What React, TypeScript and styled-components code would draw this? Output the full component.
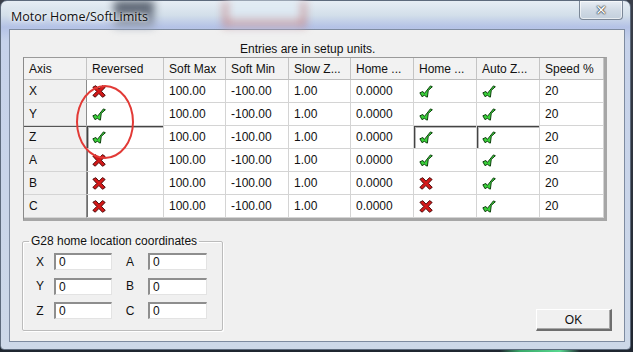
import React from "react";
import styled, { createGlobalStyle, css } from "styled-components";

const GlobalStyle = createGlobalStyle`
  html, body { margin: 0; padding: 0; }
  body {
    width: 633px;
    height: 352px;
    overflow: hidden;
    background: #2b3442;
    font-family: "Liberation Sans", Arial, sans-serif;
  }
`;

type Row = {
  axis: string;
  reversed: boolean;
  softMax: string;
  softMin: string;
  slowZone: string;
  homeOffset: string;
  homeReversed: boolean;
  autoZero: boolean;
  speed: string;
};

const rows: Row[] = [
  { axis: "X", reversed: false, softMax: "100.00", softMin: "-100.00", slowZone: "1.00", homeOffset: "0.0000", homeReversed: true, autoZero: true, speed: "20" },
  { axis: "Y", reversed: true, softMax: "100.00", softMin: "-100.00", slowZone: "1.00", homeOffset: "0.0000", homeReversed: true, autoZero: true, speed: "20" },
  { axis: "Z", reversed: true, softMax: "100.00", softMin: "-100.00", slowZone: "1.00", homeOffset: "0.0000", homeReversed: true, autoZero: true, speed: "20" },
  { axis: "A", reversed: false, softMax: "100.00", softMin: "-100.00", slowZone: "1.00", homeOffset: "0.0000", homeReversed: true, autoZero: true, speed: "20" },
  { axis: "B", reversed: false, softMax: "100.00", softMin: "-100.00", slowZone: "1.00", homeOffset: "0.0000", homeReversed: false, autoZero: true, speed: "20" },
  { axis: "C", reversed: false, softMax: "100.00", softMin: "-100.00", slowZone: "1.00", homeOffset: "0.0000", homeReversed: false, autoZero: true, speed: "20" },
];

const headers = ["Axis", "Reversed", "Soft Max", "Soft Min", "Slow Z...", "Home ...", "Home ...", "Auto Z...", "Speed %"];

const g28 = [
  ["X", "0", "A", "0"],
  ["Y", "0", "B", "0"],
  ["Z", "0", "C", "0"],
];

const CheckIcon = () => (
  <svg width="14" height="13" viewBox="0 0 13 12">
    <path
      d="M0.8 7.2 L3.6 6 L5 7.8 L10.6 0.8 L12.4 1.6 L8.6 5 L7.8 11.2 L6.2 10.6 L5.2 9.4 L2.8 10.8 Z"
      fill="#3ad13a"
      stroke="#0b3d0b"
      strokeWidth="0.9"
      strokeLinejoin="round"
    />
  </svg>
);

const CrossIcon = () => (
  <svg width="14" height="13" viewBox="0 0 13 12">
    <path
      d="M0.8 2 L3.5 0.6 L6.5 3.8 L9.8 0.5 L12.2 2.2 L8.7 5.8 L12.3 9.6 L9.8 11.4 L6.4 7.9 L3 11.3 L0.8 9.6 L4.4 6 Z"
      fill="#d41818"
      stroke="#4a0808"
      strokeWidth="0.9"
      strokeLinejoin="round"
    />
  </svg>
);

export default function App() {
  return (
    <>
      <GlobalStyle />
      <Desktop>
        <Window>
          <TitleBar>
            <Title>Motor Home/SoftLimits</Title>
            <GlassBlob $left={105} $width={40} $tone="dark" />
            <GlassBlob $left={215} $width={75} $tone="red" />
            <CloseButton>
              <CloseGlyph>✕</CloseGlyph>
            </CloseButton>
          </TitleBar>
          <Client>
            <Caption>Entries are in setup units.</Caption>
            <Grid>
              {headers.map((h, i) => (
                <HeaderCell key={i}>{h}</HeaderCell>
              ))}
              {rows.map((r) => {
                const focus = r.axis === "Z";
                const darkLeft = ["Z", "A", "B", "C"].includes(r.axis);
                return (
                  <React.Fragment key={r.axis}>
                    <AxisCell $focus={focus}>{r.axis}</AxisCell>
                    <Cell $sunken={focus} $darkLeft={darkLeft}>
                      {r.reversed ? <CheckIcon /> : <CrossIcon />}
                    </Cell>
                    <Cell>{r.softMax}</Cell>
                    <Cell>{r.softMin}</Cell>
                    <Cell>{r.slowZone}</Cell>
                    <Cell>{r.homeOffset}</Cell>
                    <Cell $sunken={focus}>{r.homeReversed ? <CheckIcon /> : <CrossIcon />}</Cell>
                    <Cell $sunken={focus}>{r.autoZero ? <CheckIcon /> : <CrossIcon />}</Cell>
                    <Cell>{r.speed}</Cell>
                  </React.Fragment>
                );
              })}
              <Annotation />
            </Grid>
            <BottomRow>
              <GroupBox>
                <Legend>G28 home location coordinates</Legend>
                <CoordGrid>
                  {g28.map((row) => (
                    <React.Fragment key={row[0]}>
                      <CoordLabel>{row[0]}</CoordLabel>
                      <CoordInput>{row[1]}</CoordInput>
                      <CoordLabel>{row[2]}</CoordLabel>
                      <CoordInput>{row[3]}</CoordInput>
                    </React.Fragment>
                  ))}
                </CoordGrid>
              </GroupBox>
              <OkButton>OK</OkButton>
            </BottomRow>
          </Client>
        </Window>
      </Desktop>
    </>
  );
}

const Desktop = styled.div`
  width: 633px;
  height: 352px;
  background:
    linear-gradient(90deg, transparent 0 500px, #3aa86a 520px, #58d890 560px, transparent 580px) 0 346px / 100% 6px no-repeat,
    linear-gradient(180deg, #3a3f4a, #1f2630);
`;

const Window = styled.div`
  width: 631px;
  height: 350px;
  box-sizing: border-box;
  padding: 0 5px 7px 8px;
  display: flex;
  flex-direction: column;
  border-radius: 7px 7px 4px 4px;
  border: 1px solid #5d6a7c;
  background: linear-gradient(180deg, #e6edf4 0%, #d3dfea 14px, #b4c2e6 26px, #c6d2ea 40px, #cdd8e8 100%);
`;

const TitleBar = styled.div`
  position: relative;
  height: 28px;
  display: flex;
  align-items: flex-start;
  padding-left: 2px;
`;

const Title = styled.div`
  position: relative;
  z-index: 1;
  margin-top: 7px;
  font-family: "Open Sans", "Liberation Sans", sans-serif;
  font-size: 12.5px;
  color: #111;
  text-shadow: 0 0 6px #fff, 0 0 3px #fff;
`;

const GlassBlob = styled.div<{ $left: number; $width: number; $tone: "dark" | "red" }>`
  position: absolute;
  top: 0;
  left: ${(p) => p.$left}px;
  width: ${(p) => p.$width}px;
  height: 26px;
  filter: blur(4px);
  ${(p) =>
    p.$tone === "dark"
      ? css`background: linear-gradient(180deg, #4b5460, #9aa4b8);`
      : css`
          background: linear-gradient(180deg, #e4eef6, #d8e4ee 70%, #c98080 85%, #b8c4e4);
          border-left: 3px solid #c07070;
          border-right: 3px solid #c07070;
        `}
`;

const CloseButton = styled.div`
  margin-left: auto;
  margin-right: 2px;
  width: 44px;
  height: 19px;
  box-sizing: border-box;
  border: 1px solid #7b8797;
  border-top: none;
  border-radius: 0 0 4px 4px;
  background: linear-gradient(180deg, #e9eef4, #cfd9e4 55%, #c3cfdc);
  box-shadow: inset 0 0 0 1px rgba(255, 255, 255, 0.6);
  display: flex;
  align-items: center;
  justify-content: center;
`;

const CloseGlyph = styled.span`
  font-family: "DejaVu Sans", sans-serif;
  font-size: 14px;
  font-weight: bold;
  color: #fff;
  text-shadow: 0 0 1px #333, 0 0 2px #333, 0 0 1px #333;
`;

const Client = styled.div`
  flex: 1;
  display: flex;
  flex-direction: column;
  padding: 0 19px 0 13px;
  background: #f0f0f0;
  border: 1px solid #7e8ba0;
`;

const Caption = styled.div`
  margin-top: 12px;
  height: 14px;
  line-height: 14px;
  padding-left: 217px;
  font-size: 12px;
  color: #111;
`;

const Grid = styled.div`
  position: relative;
  margin-top: 1px;
  display: grid;
  grid-template-columns: 63px 77px 62px 63px 62px 63px 63px 63px 64px;
  grid-template-rows: 22px repeat(6, 23px);
  width: 584px;
  box-sizing: border-box;
  border-left: 1px solid #8a8a8a;
  border-top: 1px solid #9a9a9a;
  border-right: 3px solid #a6a6a6;
  border-bottom: 3px solid #a6a6a6;
  background: #fff;
  font-size: 12px;
  color: #111;
`;

const cellBase = css`
  box-sizing: border-box;
  display: flex;
  align-items: center;
  padding-left: 5px;
  white-space: nowrap;
  overflow: hidden;
  border-right: 1px solid #d4d4d4;
  border-bottom: 1px solid #d4d4d4;
`;

const HeaderCell = styled.div`
  ${cellBase};
  background: #f2f2f2;
  border-right-color: #c4c4c4;
  border-bottom-color: #bdbdbd;
`;

const AxisCell = styled.div<{ $focus?: boolean }>`
  ${cellBase};
  background: #f0f0f0;
  border-right: 1px solid #8c8c8c;
  ${(p) => p.$focus && css`box-shadow: inset 0 1px 0 #555;`}
`;

const Cell = styled.div<{ $sunken?: boolean; $darkLeft?: boolean }>`
  ${cellBase};
  background: #fff;
  ${(p) => p.$darkLeft && css`box-shadow: inset 1px 0 0 #6d6d6d;`}
  ${(p) => p.$sunken && css`box-shadow: inset 1px 1px 0 #444, inset 2px 2px 0 #b5b5b5;`}
`;

const Annotation = styled.div`
  position: absolute;
  left: 52px;
  top: 27px;
  width: 58px;
  height: 74px;
  box-sizing: border-box;
  border: 2px solid #e23a36;
  border-radius: 50%;
  pointer-events: none;
`;

const BottomRow = styled.div`
  margin-top: 13px;
  margin-right: -7px;
  display: flex;
  align-items: flex-end;
  justify-content: space-between;
`;

const GroupBox = styled.fieldset`
  margin: 0 0 0 -1px;
  width: 201px;
  height: 97px;
  box-sizing: border-box;
  padding: 0;
  border: 1px solid #bcbcbc;
  border-radius: 2px;
  box-shadow: inset 1px 1px 0 #fff, 1px 1px 0 #fff;
`;

const Legend = styled.legend`
  margin-left: 6px;
  padding: 0 2px;
  font-size: 12px;
  line-height: 14px;
  color: #111;
`;

const CoordGrid = styled.div`
  display: grid;
  grid-template-columns: 18px 58px 26px 59px;
  grid-auto-rows: 17px;
  column-gap: 5px;
  row-gap: 7.5px;
  padding: 5px 0 0 8px;
`;

const CoordLabel = styled.div`
  display: flex;
  align-items: center;
  justify-content: center;
  font-size: 12px;
  color: #111;
`;

const CoordInput = styled.div`
  box-sizing: border-box;
  display: flex;
  align-items: center;
  padding-left: 3px;
  background: #fff;
  border-top: 2px solid #8e8e8e;
  border-left: 2px solid #8e8e8e;
  border-right: 1px solid #e3e3e3;
  border-bottom: 1px solid #e3e3e3;
  font-size: 12px;
  color: #111;
`;

const OkButton = styled.div`
  width: 76px;
  height: 22px;
  box-sizing: border-box;
  display: flex;
  align-items: center;
  justify-content: center;
  background: #f0f0f0;
  border-top: 1px solid #fff;
  border-left: 1px solid #fff;
  border-right: 2px solid #6e6e6e;
  border-bottom: 2px solid #6e6e6e;
  box-shadow: inset -1px -1px 0 #a8a8a8;
  font-size: 12px;
  color: #111;
`;
